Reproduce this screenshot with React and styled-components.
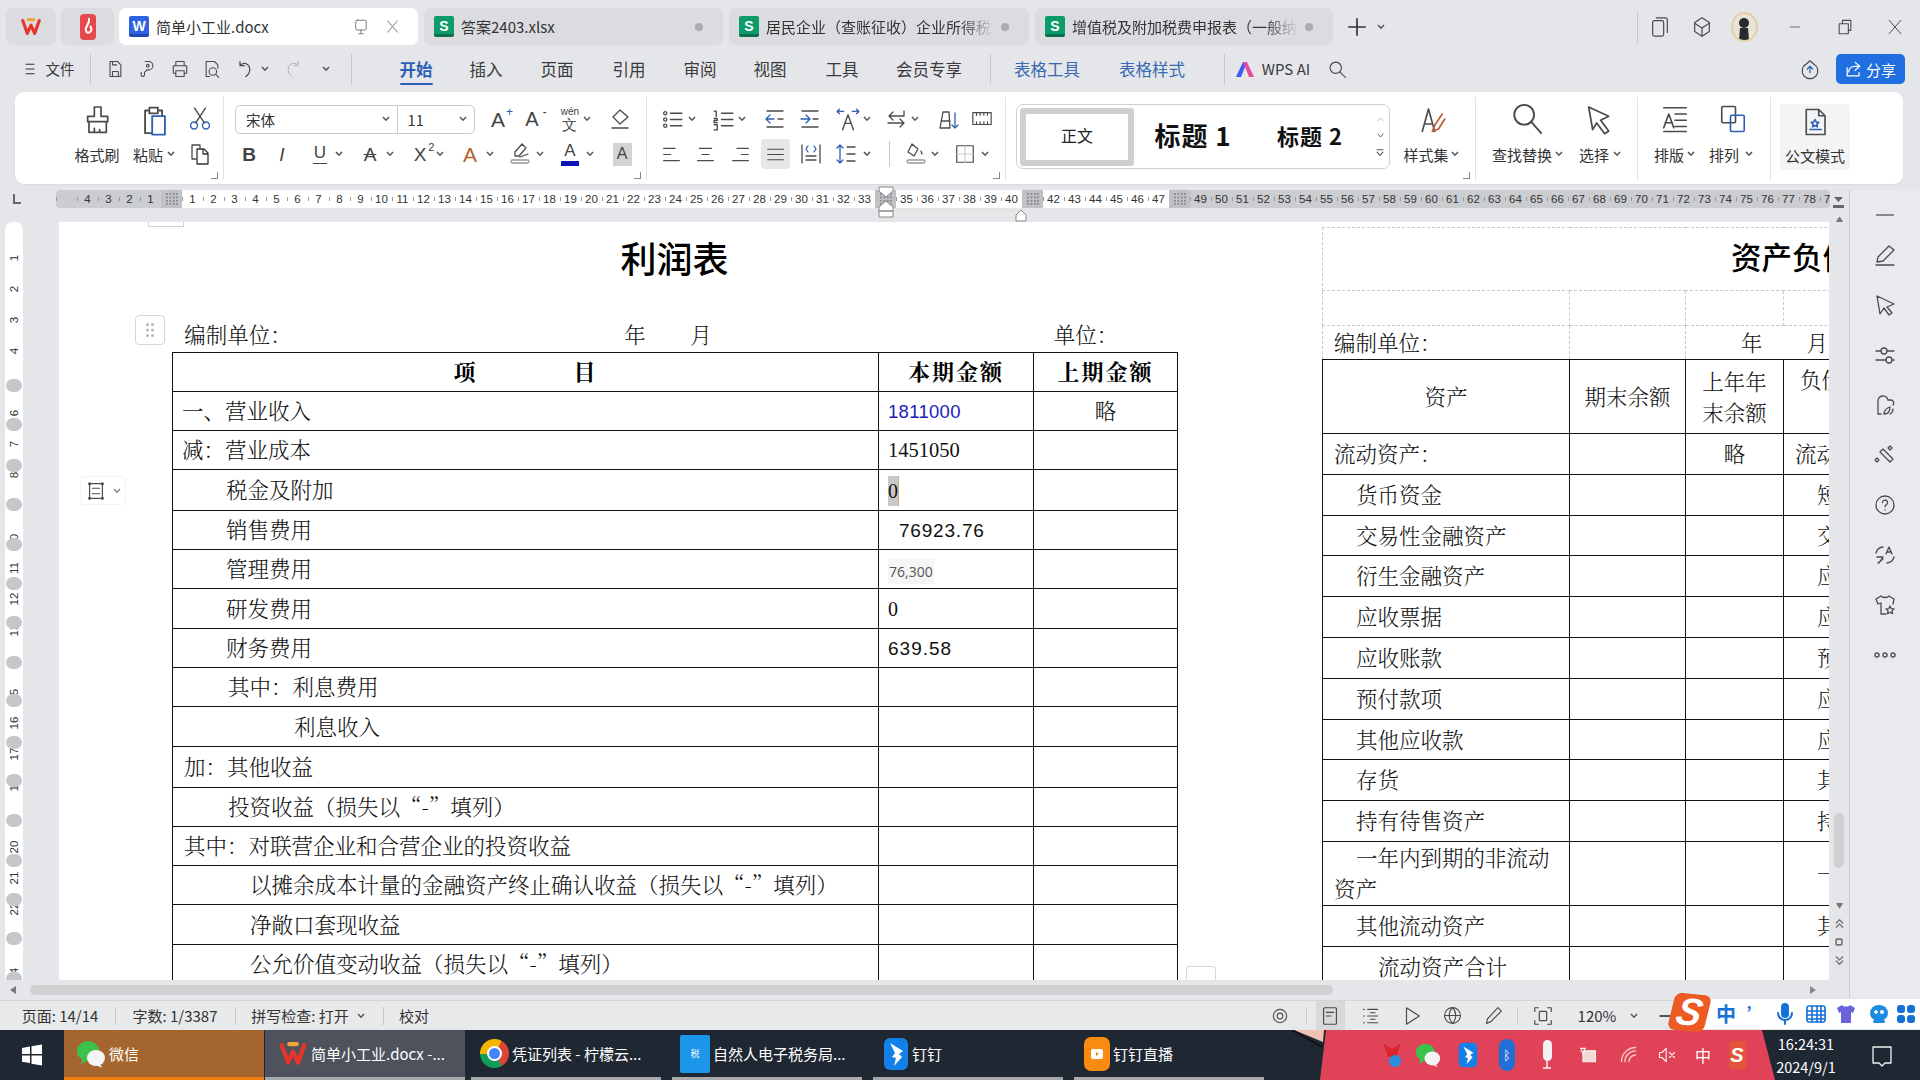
import React from 'react';
import styled, { createGlobalStyle } from 'styled-components';

const Global = createGlobalStyle`
  html, body { margin: 0; padding: 0; background: #e4e6ea; overflow: hidden; }
  * { box-sizing: border-box; }
`;
const UI = `"Noto Sans CJK SC", "Noto Sans", sans-serif`;
const SONG = `"Noto Serif CJK SC", "Noto Sans CJK SC", serif`;

const Win = styled.div`
  width: 1920px; height: 1080px; overflow: hidden; display: flex; flex-direction: column;
  background: #e4e6ea; font-family: ${UI}; color: #333; position: relative;
`;
const TrackBox = styled.div`
  display: flex; align-items: center; flex: none; height: ${p => p.$h || '100%'};
`;
const SlotBox = styled.div`
  flex: none; display: flex; align-items: center; justify-content: center; white-space: nowrap;
  width: ${p => p.$w}px; margin-left: ${p => p.$ml}px; height: 100%;
`;
const Placed = ({ start = 0, h, items }) => {
  let cur = start;
  return (
    <TrackBox $h={h}>
      {items.map(([c, w, el], i) => {
        const ml = c - w / 2 - cur;
        cur = c + w / 2;
        return <SlotBox key={i} $w={w} $ml={ml}>{el}</SlotBox>;
      })}
    </TrackBox>
  );
};

const Svg = ({ s = 20, sw = 1.3, c = '#4b4b4b', children, vb = '0 0 24 24', w }) => (
  <svg width={w || s} height={s} viewBox={vb} fill="none" stroke={c} strokeWidth={sw} strokeLinecap="round" strokeLinejoin="round">{children}</svg>
);
const Caret = ({ c = '#555' }) => (
  <svg width="8" height="6" viewBox="0 0 8 6" fill="none" stroke={c} strokeWidth="1.5"><path d="M1 1l3 3.2L7 1" /></svg>
);
const Launch = styled.div`
  position: absolute; right: 5px; bottom: 1px; width: 7px; height: 7px;
  border-right: 1.3px solid #888; border-bottom: 1.3px solid #888;
`;
const BLUE = '#2f5fb5';

/* ---------- title bar ---------- */
const TitleBar = styled.div`
  height: 50px; flex: none; display: flex; padding: 8px 0 5px 6px; gap: 5px;
`;
const AppTile = styled.div`
  width: ${p => p.$w}px; flex: none; border-radius: 7px; background: #dadce0;
  display: flex; align-items: center; justify-content: center;
`;
const Tab = styled.div`
  width: ${p => p.$w}px; margin-left: ${p => p.$ml || 0}px; flex: none; border-radius: 7px;
  background: ${p => (p.$active ? '#fff' : '#dadce0')}; display: flex; align-items: center;
  padding: 0 10px; gap: 7px; font-size: 15px; color: #333;
`;
const TabName = styled.div`
  flex: 1; white-space: nowrap; overflow: hidden;
  ${p => p.$fade && 'mask-image: linear-gradient(90deg, #000 85%, transparent);'}
`;
const DocIcon = styled.div`
  width: 20px; height: 21px; border-radius: 2px; flex: none; color: #fff; font: bold 14px/20px "Liberation Sans", sans-serif;
  text-align: center; background: ${p => p.$bg}; border-bottom: 3px solid ${p => p.$dk};
`;
const TabDot = styled.div`
  width: 8px; height: 8px; border-radius: 50%; background: #a9abaf; margin-right: 10px; flex: none;
`;
const VSep = styled.div`
  width: 1px; height: ${p => p.$h || 30}px; background: #c6c8cc;
`;
const TitleTools = styled.div`
  flex: 1; margin-left: -5px;
`;

/* ---------- menu bar ---------- */
const MenuBar = styled.div`
  height: 42px; flex: none; display: flex; position: relative; padding-bottom: 4px;
`;
const MenuText = styled.span`
  font-size: ${p => p.$fs || 16.5}px; font-weight: ${p => (p.$b ? 700 : 400)}; color: ${p => p.$c || '#3a3a3a'};
  position: relative; line-height: 30px;
  ${p => p.$b && `&::after { content: ''; position: absolute; left: 0; right: 0; bottom: -1px; height: 2.5px; background: ${BLUE}; border-radius: 1px; }`}
`;
const ShareBtn = styled.div`
  width: 69px; height: 30px; border-radius: 5px; background: #1f6fe0; color: #fff; font-size: 15px;
  display: flex; align-items: center; justify-content: center; gap: 3px;
`;

/* ---------- ribbon ---------- */
const Ribbon = styled.div`
  height: 92px; margin: 0 17px 0 15px; flex: none; background: #fff; border-radius: 9px; display: flex;
  box-shadow: 0 1px 2px rgba(0,0,0,.05);
`;
const Group = styled.div`
  width: ${p => p.$w}px; flex: none; position: relative; margin: 5px 0 4px;
  padding-top: 7px; border-right: ${p => (p.$last ? 'none' : '1px solid #e2e3e5')};
  display: flex; flex-direction: ${p => (p.$row ? 'row' : 'column')};
`;
const Stack = styled.div`
  display: flex; flex-direction: column; flex: none;
`;
const RibbonRow = styled.div`
  height: 30px; margin-bottom: 5px; display: flex;
`;
const RLabel = styled.span`
  font-size: 15px; color: #333;
`;
const FontBox = styled.div`
  width: 240px; height: 29px; border: 1px solid #c9cacd; border-radius: 5px; display: flex; align-items: center;
  font-size: 14.5px; color: #333;
`;
const FontCell = styled.div`
  width: ${p => p.$w}px; height: 100%; display: flex; align-items: center; justify-content: space-between;
  padding: 0 7px 0 10px; border-left: ${p => (p.$div ? '1px solid #c9cacd' : 'none')};
`;
const TextIcon = styled.span`
  font-family: "Liberation Sans", sans-serif; font-size: ${p => p.$fs || 19}px; font-weight: ${p => (p.$b ? 700 : 400)};
  font-style: ${p => (p.$i ? 'italic' : 'normal')}; color: ${p => p.$c || '#444'}; line-height: 1; position: relative;
  display: inline-flex; flex-direction: column; align-items: center;
`;
const Sup = styled.span`
  position: absolute; top: -3px; right: -8px; font-size: ${p => p.$fs || 12}px; color: ${p => p.$c || BLUE};
`;
const Under = styled.span`
  display: block; width: ${p => p.$w || 14}px; height: ${p => p.$h || 1.5}px; background: ${p => p.$c || '#444'}; margin-top: 2px;
`;
const GreyA = styled.span`
  width: 19px; height: 23px; background: #d2d3d5; display: flex; align-items: center; justify-content: center;
  font: 16px "Liberation Sans", sans-serif; color: #444;
`;
const HoverBox = styled.div`
  width: 29px; height: 30px; background: #e6e7e9; border-radius: 4px; display: flex; align-items: center; justify-content: center;
`;
const Gallery = styled.div`
  width: 374px; height: 65px; margin-left: 10px; border: 1px solid #cfd0d3; border-radius: 7px; display: flex; align-items: center;
  padding-left: 3px; flex: none; background: #fff;
`;
const StyleBox = styled.div`
  width: 114px; height: 58px; border: 6px solid #cfcfcf; border-radius: 3px; display: flex; align-items: center; justify-content: center;
  font-size: 16px; color: #222; flex: none; padding-bottom: 4px;
`;
const StyleName = styled.div`
  font-weight: 700; color: #111; white-space: nowrap; flex: none; letter-spacing: 1px; margin-top: -4px;
  font-size: ${p => p.$fs}px; width: ${p => p.$w}px; text-align: center;
`;
const GalleryScroll = styled.div`
  width: 24px; flex: none; height: 100%; display: flex; flex-direction: column; align-items: center; justify-content: space-around; padding: 6px 0;
`;
const ModeBox = styled.div`
  width: 70px; height: 66px; margin-left: 9px; background: #f3f4f5; border-radius: 4px; display: flex; flex-direction: column;
  align-items: center; justify-content: space-between; padding: 3px 0 4px;
`;

/* ---------- ruler ---------- */
const RulerRow = styled.div`
  height: 24px; flex: none; padding-top: 6px; display: flex; position: relative; z-index: 2;
`;
const RulerCorner = styled.div`
  width: 56px; flex: none; display: flex; align-items: center; padding-left: 12px;
`;
const Strip = styled.div`
  width: 1774px; height: 18px; flex: none; display: flex; border-radius: 4px; overflow: hidden;
`;
const RCell = styled.div`
  width: 21px; flex: none; height: 100%; position: relative; text-align: center;
  background: ${p => (p.$dark ? '#cbcdd0' : '#fff')}; font: 11.5px/18px "Liberation Sans", sans-serif; color: #333;
  &::before { content: ''; position: absolute; left: 0; top: 7px; height: 4px; width: 1px; background: #999; }
`;
const RKnob = styled.div`
  width: 21px; flex: none; height: 100%; background: #bfc1c4; display: flex; align-items: center; justify-content: center;
`;
const Overlay = styled.div`
  position: absolute; left: ${p => p.$x}px; top: ${p => p.$y}px; z-index: 3;
`;
const MarkerRail = styled.div`
  position: absolute; left: 895px; top: 28px; width: 122px; height: 4px; background: #e8e8e8;
`;

/* ---------- workspace ---------- */
const Workspace = styled.div`
  flex: 1; min-height: 0; display: flex;
`;
const DocColumn = styled.div`
  flex: 1; min-width: 0; display: flex; flex-direction: column;
`;
const DocBody = styled.div`
  flex: 1; min-height: 0; display: flex; padding-top: 14px; position: relative;
`;
const VRulerWrap = styled.div`
  width: 59px; flex: none; padding-left: 5px;
`;
const VRuler = styled.div`
  width: 18px; height: 100%; background: #fff; border-radius: 8px 8px 0 0; overflow: hidden; position: relative; padding-top: 20px;
`;
const VCell = styled.div`
  height: 31px; display: flex; align-items: center; justify-content: center; position: relative;
  font: 11.5px "Liberation Sans", sans-serif; color: #333;
`;
const VNum = styled.span`
  transform: rotate(-90deg);
`;
const VKnob = styled.div`
  position: absolute; left: 1px; width: 16px; height: 13px; border-radius: 7px; background: #c6c7c8; top: ${p => p.$y}px;
`;
const Page = styled.div`
  flex: 1; min-width: 0; background: #fff; display: flex; overflow: hidden; padding-left: 113px;
  position: relative; color: #111; font-family: ${SONG}; font-size: 21.5px; font-weight: 300;
`;
const ProfitColumn = styled.div`
  width: 1005px; flex: none; display: flex; flex-direction: column;
`;
const SheetTitle = styled.div`
  height: 72px; line-height: 70px; text-align: center; font-size: 36px; font-weight: 500; letter-spacing: 0; flex: none;
  color: #000; font-family: ${UI};
`;
const MetaRow = styled.div`
  height: 34px; margin-top: 24px; flex: none; padding-bottom: 3px;
`;
const Grid = styled.table`
  border-collapse: collapse; table-layout: fixed; flex: none; width: ${p => p.$w}px;
`;
const Rw = styled.tr`
  height: ${p => p.$h}px;
`;
const Cell = styled.td`
  border: ${p => (p.$dash ? '1px dashed #c8c8c8' : '1px solid #111')};
  padding: 0 0 2px ${p => (p.$pad ?? 9) + (p.$ind || 0)}px; white-space: nowrap; vertical-align: middle;
  line-height: 30px;
  text-align: ${p => (p.$center ? 'center' : 'left')};
  ${p => p.$center && 'padding-left: 0;'}
  ${p => p.$b && 'font-weight: 700; letter-spacing: 2px; font-size: 22px; text-align: center; padding-left: 0; color: #000;'}
`;
const HeaderTop = styled(Cell)`
  vertical-align: top; padding-top: 4px;
`;
const Num = styled.span`
  font-family: ${p => (p.$sans ? '"Liberation Sans", sans-serif' : '"Liberation Serif", serif')}; font-size: ${p => p.$fs || 20}px;
  color: ${p => p.$c || '#111'}; letter-spacing: ${p => p.$ls || 0}px; margin-left: ${p => p.$ml || 0}px; font-weight: 400;
`;
const Selected = styled.span`
  display: inline-block; background: #c9c9c9; width: 11px; height: 30px; line-height: 30px; font: 20px/30px "Liberation Serif", serif; vertical-align: middle;
  border-right: 1px solid #d9a877;
`;
const SmallNum = styled.span`
  font: 14px "Open Sans", sans-serif; color: #555; background: #f4f5f4; padding: 3px 1px; font-weight: 400;
`;
const WrapCell = styled.div`
  white-space: normal; line-height: 30.5px; text-indent: ${p => p.$ti}px; padding-right: 10px;
`;
const BalanceColumn = styled.div`
  width: 661px; flex: none; margin-left: 145px; padding-top: 5px;
`;
const BalanceTitle = styled.span`
  font-size: 30.5px; font-weight: 500; color: #000; font-family: ${UI};
`;
const LongCell = styled.div`
  line-height: 31px; white-space: normal; text-align: center; font-size: 21.5px;
`;
const YearMonth = styled.span`
  margin-left: 44px;
`;
const MoveHandle = styled.div`
  position: absolute; left: 135px; top: 107px; width: 30px; height: 30px; border: 1px solid #d5d6d8; border-radius: 4px; background: #fff;
  display: flex; align-items: center; justify-content: center; z-index: 2;
`;
const RowHandle = styled.div`
  position: absolute; left: 80px; top: 268px; width: 46px; height: 29px; border: 1px solid #f4f4f4; border-radius: 4px; background: #fff;
  display: flex; align-items: center; gap: 6px; padding-left: 4px; z-index: 2;
`;
const CornerMark = styled.div`
  position: absolute; left: 148px; top: 14px; width: 36px; height: 5px; border: 1px solid #d0d0d0; border-top: none; z-index: 2;
`;
const AddHandle = styled.div`
  position: absolute; left: 1186px; bottom: 0; width: 30px; height: 14px; border: 1px solid #d5d6d8; border-bottom: none; border-radius: 4px 4px 0 0; background: #fff; z-index: 2;
`;
const VScroll = styled.div`
  width: 20px; flex: none; position: relative; display: flex; flex-direction: column; align-items: center;
  padding-top: 7px; margin-top: -14px;
`;
const VArrows = styled.div`
  position: absolute; left: 0; right: 0; top: 693px; display: flex; flex-direction: column; align-items: center; gap: 8px; color: #777;
`;
const VThumb = styled.div`
  position: absolute; left: 5px; top: 605px; width: 10px; height: 55px; border-radius: 5px; background: #cfd0d2;
`;
const HScroll = styled.div`
  height: 20px; flex: none; padding-top: 5px; display: flex; align-items: flex-start; position: relative;
`;
const HThumb = styled.div`
  margin-left: 30px; width: 1303px; height: 10px; border-radius: 5px; background: #cfd0d2;
`;
const Tri = styled.div`
  position: absolute; top: 6px; left: ${p => p.$x}px; width: 0; height: 0;
  border-top: 4px solid transparent; border-bottom: 4px solid transparent;
  ${p => (p.$dir === 'l' ? 'border-right: 6px solid #777;' : 'border-left: 6px solid #888;')}
`;
const Sidebar = styled.div`
  width: 71px; flex: none; border-left: 1px solid #cfd1d4; background: #e9eaee; display: flex; flex-direction: column; align-items: center; margin-top: -18px; padding-top: 18px;
`;
const SideDash = styled.div`
  width: 18px; height: 2px; background: #888; margin: 6px 0 14px;
`;
const SideSlot = styled.div`
  height: 50px; flex: none; display: flex; align-items: center; justify-content: center;
`;

/* ---------- status ---------- */
const StatusBar = styled.div`
  height: 30px; flex: none; background: #e8e9eb; border-top: 1px solid #d4d5d7; display: flex; font-size: 15px; color: #333; position: relative;
`;
const ViewBox = styled.div`
  width: 29px; height: 30px; background: #d8d9db; display: flex; align-items: center; justify-content: center;
`;
const ImeBar = styled.div`
  position: absolute; left: 1690px; top: -3px; width: 232px; height: 32px; background: #fff; border: 1px solid #e6e6e6; z-index: 4; display: flex;
`;
const SogouMark = styled.div`
  position: absolute; left: 1671px; top: -7px; width: 37px; height: 37px; border-radius: 7px; background: #ee5a24; z-index: 5;
  transform: skewX(-8deg) rotate(6deg); color: #fff; font: italic 900 38px/37px "Liberation Sans", sans-serif; text-align: center;
`;

/* ---------- taskbar ---------- */
const Taskbar = styled.div`
  height: 50px; flex: none; background: #1f2733; display: flex; position: relative; color: #fff; font-size: 15px;
`;
const StartBtn = styled.div`
  width: 64px; flex: none; display: flex; align-items: center; justify-content: center;
`;
const TaskItem = styled.div`
  width: ${p => p.$w}px; margin-left: ${p => p.$ml || 0}px; flex: none; height: 100%; display: flex; align-items: center; gap: 3px; padding-left: ${p => p.$pl || 5}px;
  background: ${p => p.$bg || 'transparent'}; border-bottom: 3px solid ${p => p.$line || '#a8a9ab'}; white-space: nowrap;
`;
const Tray = styled.div`
  position: absolute; left: 1320px; top: 0; width: 455px; height: 50px; background: #e04357;
  clip-path: polygon(6px 0, 442px 0, 455px 100%, 0 100%);
`;
const Wedge = styled.div`
  position: absolute; left: 1288px; top: 0; z-index: 1;
`;
const TrayIcons = styled.div`
  position: absolute; left: 0; top: 0; z-index: 2; height: 50px; width: 1775px;
`;
const Clock = styled.div`
  position: absolute; left: 1770px; top: 0; width: 72px; height: 50px; display: flex; flex-direction: column; align-items: center; justify-content: center;
  font-size: 14.5px; line-height: 23px; z-index: 2;
`;
const Notify = styled.div`
  position: absolute; left: 1870px; top: 14px; z-index: 2;
`;
const TrayLabel = styled.span`
  font-size: 16px; color: #fff;
`;
const ChromeBall = styled.div`
  width: 29px; height: 29px; border-radius: 50%; flex: none; position: relative;
  background: conic-gradient(from 30deg, #db4437 0 120deg, #0f9d58 120deg 240deg, #f4b400 240deg 360deg);
  &::after { content: ''; position: absolute; inset: 7px; border-radius: 50%; background: #4285f4; border: 2.5px solid #fff; }
`;
const TaskTile = styled.div`
  width: ${p => p.$w || 29}px; height: ${p => p.$h || 30}px; border-radius: ${p => p.$r || 4}px; background: ${p => p.$bg}; flex: none; display: flex; align-items: center; justify-content: center;
  color: #fff; font-size: 9px;
`;
const AvatarRing = styled.div`
  width: 27px; height: 30px; border-radius: 50%; border: 2px solid #e6cfa2; background: #e9e3d9; overflow: hidden; display: flex; align-items: flex-end; justify-content: center;
`;

/* ---------- icons ---------- */
const WpsW = ({ s = 22 }) => (
  <Svg s={s} c="#e8332a" sw={3.4}><path d="M3 5l5 14 4-9 4 9 5-14" /><path d="M9 4h6" stroke="#f2a33a" /></Svg>
);
const PdfIcon = () => (
  <svg width="18" height="28" viewBox="0 0 18 28"><rect x="1" y="1" width="16" height="26" rx="4" fill="#e5484d" /><path d="M10 5c1 5-2 7-3 10s1 6 4 4c2-2 2-4 0-6" stroke="#fff" strokeWidth="2" fill="none" /></svg>
);
const Icons = {
  menu: <Svg s={16} c="#333" sw={1.6}><path d="M6 5h12M6 12h12M6 19h12" /></Svg>,
  save: <Svg><path d="M6 3h9l4 4v14H6zM9 21v-6h7v6M9 3v4h5" /></Svg>,
  key: <Svg><path d="M10 3h4a5 5 0 0 1 0 10h-2l-3 3v3a2 2 0 0 1-4 0v-3" /><circle cx="13" cy="8" r="1.6" /></Svg>,
  print: <Svg><path d="M7 8V3h10v5M7 17H4V8h16v9h-3M7 14h10v7H7z" /></Svg>,
  preview: <Svg><path d="M9 21H5V3h10l4 4v4" /><circle cx="13" cy="15" r="4.5" /><path d="M16.5 18.5 20 22" /></Svg>,
  undo: <Svg sw={1.5}><path d="M13 21c4-3 6-7 4-12-2-4-7-5-10-2M6 3v5h5" /></Svg>,
  redo: <Svg sw={1.2} c="#b0b2b5"><path d="M11 21c-4-3-6-7-4-12 2-4 7-5 10-2M18 3v5h-5" /></Svg>,
  search: <Svg s={21}><circle cx="10" cy="10" r="6.5" /><path d="M15 15l6 6" /></Svg>,
  cloud: <Svg s={22}><path d="M12 3l4 3.5a8.5 8.5 0 1 1-8 0z" /><path d="M12 16V9M9 12l3-3 3 3" stroke="#2f5fb5" /></Svg>,
  share: <Svg s={19} c="#fff" sw={1.6}><path d="M14 3l6 5-6 5M20 8h-6c-5 0-8 3-8 7M4 10v10h15v-4" /></Svg>,
  monitor: <Svg s={18} c="#777"><rect x="5" y="3" width="14" height="13" rx="2" /><path d="M12 16v4M9 21h6" /></Svg>,
  close: <Svg s={17} c="#777" sw={1.4}><path d="M5 4l14 16M19 4 5 20" /></Svg>,
  stack: <Svg s={22}><rect x="4" y="5" width="12" height="17" rx="2" /><path d="M8 2h10a2 2 0 0 1 2 2v14" /></Svg>,
  cube: <Svg s={22}><path d="M12 2l8 5v10l-8 5-8-5V7z" /><path d="M4 8l8 5 8-5M12 13v9" /></Svg>,
  min: <Svg s={16} sw={1.2}><path d="M5 12h14" /></Svg>,
  restore: <Svg s={20}><rect x="5" y="8" width="11" height="12" /><path d="M9 8V4h10v12h-3" /></Svg>,
  xBig: <Svg s={20} sw={1.2}><path d="M5 4l14 16M19 4 5 20" /></Svg>,
  brush: <Svg s={32}><path d="M10 3h5v7h5v4H5v-4h5zM6 14v8h13v-8M10 22v-3M14 22v-2" /></Svg>,
  paste: <Svg s={34}><path d="M7 6H5v16h5M15 6h2v4" /><path d="M8 4h6v4H8z" /><rect x="10" y="10" width="9" height="13" stroke="#2f5fb5" /></Svg>,
  scissors: <Svg s={26}><circle cx="6.5" cy="18" r="3.2" stroke="#2f5fb5" /><circle cx="17.5" cy="18" r="3.2" stroke="#2f5fb5" /><path d="M8 15.5 17 2M16 15.5 7 2" /></Svg>,
  copy: <Svg s={24}><path d="M4 3h8v3M4 3v14h4" /><path d="M9 7h7l4 4v11H9zM15 8v4h5" stroke="#333" /></Svg>,
  wen: <TextIcon $fs={10}><span>wén</span><TextIcon $fs={15}>文</TextIcon></TextIcon>,
  eraser: <Svg s={24}><path d="M12 3l8 7-8 7-7-7z" /><path d="M4 21h16" /></Svg>,
  bullets: <Svg s={25}><circle cx="5" cy="6" r="1.5" /><circle cx="5" cy="12" r="1.5" /><circle cx="5" cy="18" r="1.5" /><path d="M10 6h11M10 12h11M10 18h11" /></Svg>,
  numbers: <Svg s={25}><path d="M3 4h2v5M3 11h3v2H3v2h3M3 17h3v5H3" /><path d="M10 6h11M10 12h11M10 18h11" /></Svg>,
  outdent: <Svg s={24}><path d="M4 4h16M4 20h16M15 12h5" /><path d="M11 12H3M7 8l-4 4 4 4" stroke="#2f5fb5" /></Svg>,
  indent: <Svg s={24}><path d="M4 4h16M4 20h16M15 12h5" /><path d="M3 12h8M8 8l4 4-4 4" stroke="#2f5fb5" /></Svg>,
  spreadA: <Svg s={26}><path d="M2 5h6M16 5h6M4 3 2 5l2 2M20 3l2 2-2 2" stroke="#2f5fb5" /><path d="M7 22l5-14 5 14M9 16h6" /></Svg>,
  swap: <Svg s={24}><path d="M20 4v5H5M9 5 5 9l4 4M4 16h16M16 12l4 4-4 4" /></Svg>,
  sort: <Svg s={24}><path d="M5 21l3-16h6l1 16zM6 14h9" /><path d="M20 6v15M17 18l3 3 3-3" stroke="#2f5fb5" /></Svg>,
  rulerI: <Svg s={22}><path d="M2 5h20M2 5v13M22 5v13M2 18h20" /><path d="M6 5v3M10 5v3M14 5v3M18 5v3M6 18v-3M10 18v-3M14 18v-3M18 18v-3" /></Svg>,
  alignL: <Svg s={21}><path d="M3 5h13M3 12h8M3 19h18" /></Svg>,
  alignC: <Svg s={21}><path d="M5 5h14M8 12h8M3 19h18" /></Svg>,
  alignR: <Svg s={21}><path d="M8 5h13M13 12h8M3 19h18" /></Svg>,
  justify: <Svg s={21}><path d="M3 6h18M3 12h18M3 18h18" /></Svg>,
  dist: <Svg s={24}><path d="M3 3v18M21 3v18M7 18h10M7 14h10" /><path d="M9 4 7 7l2 3M15 4l2 3-2 3" stroke="#2f5fb5" /></Svg>,
  spacing: <Svg s={24}><path d="M6 3v18M3 6l3-3 3 3M3 18l3 3 3-3" stroke="#2f5fb5" /><path d="M13 5h8M13 12h8M13 19h8" /></Svg>,
  shade: <Svg s={24}><path d="M8 2l6 5-4 7-6-4zM17 9l1 3" /><rect x="3" y="18" width="18" height="3" rx="1.5" stroke="#999" /></Svg>,
  border: <Svg s={22}><rect x="3" y="3" width="18" height="18" /><path d="M12 3v18M3 12h18" stroke="#c8c8c8" /></Svg>,
  highlight: <Svg s={24}><path d="M14 2l4 4-7 8H7v-4zM20 12l-8 3" /><rect x="3" y="18" width="18" height="3" rx="1.5" stroke="#999" /></Svg>,
  styleSet: <Svg s={30}><path d="M5 22l5-18 5 18M7 16h6" /><path d="M21 8l-6 9-2 5 5-2 5-8" stroke="#c05a32" /></Svg>,
  bigSearch: <Svg s={34}><circle cx="10" cy="9" r="7" /><path d="M15 14l7 8" /></Svg>,
  cursor: <Svg s={32}><path d="M5 3l15 7-6 3 6 8-3 2-6-8-3 5z" /></Svg>,
  layout: <Svg s={30}><path d="M3 3h18M3 22h18M12 8h9M12 13h9M12 18h9M3 19l4-11 4 11M4 15h6" /></Svg>,
  arrange: <Svg s={30}><rect x="3" y="2" width="11" height="13" rx="1" /><rect x="10" y="9" width="11" height="13" rx="1" stroke="#2f5fb5" /></Svg>,
  modeDoc: <Svg s={30}><path d="M5 2h10l5 5v15H5zM15 2v5h5" /><path d="M12 10l1 2 2 .3-1.5 1.4.4 2.1-1.9-1-1.9 1 .4-2.1L9 12.3l2-.3zM8 18h9" stroke="#2f5fb5" /></Svg>,
  dots: <svg width="10" height="16" viewBox="0 0 10 16" fill="#b6b7b9"><circle cx="2.5" cy="2.5" r="1.5" /><circle cx="7.5" cy="2.5" r="1.5" /><circle cx="2.5" cy="8" r="1.5" /><circle cx="7.5" cy="8" r="1.5" /><circle cx="2.5" cy="13.5" r="1.5" /><circle cx="7.5" cy="13.5" r="1.5" /></svg>,
  grip: <svg width="12" height="12" viewBox="0 0 12 12" fill="#8a8b8d">{[1, 4.5, 8, 11].flatMap(y => [1, 4.5, 8, 11].map(x => <rect key={x + '-' + y} x={x - 1} y={y - 1} width="1.8" height="1.8" />))}</svg>,
  rowIcon: <Svg s={22}><path d="M5 4h14M5 20h14M5 4v16M19 4v16M8 9h8M8 15h8" /><circle cx="5" cy="4" r="1" fill="#555" /><circle cx="19" cy="4" r="1" fill="#555" /><circle cx="5" cy="20" r="1" fill="#555" /><circle cx="19" cy="20" r="1" fill="#555" /></Svg>,
  hour: <svg width="20" height="32" viewBox="0 0 20 32" fill="#fff" stroke="#888" strokeWidth="1"><path d="M3 1h14v4l-7 6-7-6zM3 21l7-6 7 6v4H3zM3 25h14v6H3z" /></svg>,
  tab: <svg width="14" height="14" viewBox="0 0 14 14" fill="#fff" stroke="#888"><path d="M7 1l5 5v6H2V6z" /></svg>,
  corner: <svg width="10" height="12" viewBox="0 0 10 12" fill="none" stroke="#666" strokeWidth="2"><path d="M2 1v9h7" /></svg>,
  rulerEnd: <svg width="13" height="14" viewBox="0 0 13 14" fill="#666"><path d="M2 1h9L6.500 6zM1 9h11v3H1z" /></svg>,
  pen: <Svg s={24}><path d="M16 3l5 4-11 11-6 1 1-5zM3 22h18" /></Svg>,
  cursor2: <Svg s={24}><path d="M4 3l17 8-7 3 5 6-3 2-5-7-4 6z" /></Svg>,
  sliders: <Svg s={24}><path d="M3 8h5M14 8h7M3 17h10M19 17h2" /><circle cx="11" cy="8" r="3" /><circle cx="16" cy="17" r="3" /></Svg>,
  leaf: <Svg s={24}><path d="M8 21H5V9a5 5 0 0 1 10-2h3a3 3 0 0 1 2 5M11 21c0-4 3-6 6-7 0 4-2 7-6 7zM17 21c2-1 3-3 3-5" /></Svg>,
  wand: <Svg s={24}><path d="M7 9l3-3 10 10-3 3zM4 15l2 2-2 2-2-2zM17 3l2 2-2 2-2-2z" /></Svg>,
  help: <Svg s={24}><circle cx="12" cy="12" r="9" /><path d="M9.5 9.5a2.5 2.5 0 1 1 3.7 2.2c-.8.5-1.2 1-1.2 2M12 17h.1" /></Svg>,
  trans: <Svg s={24}><path d="M10 4a8 8 0 0 0-7 6M14 20a8 8 0 0 0 7-6M13 11l3-7 3 7M14 9h4M4 14h6l-4 6M5 20l5-4" /></Svg>,
  shirt: <Svg s={24}><path d="M8 3L3 6l2 5 3-1v11h5M16 3l5 3-1 5M8 3c1 2 7 2 8 0" /><path d="M17 13l1.2 2.6 2.8.3-2 2 .5 2.8-2.5-1.4-2.5 1.4.5-2.8-2-2 2.8-.3z" /></Svg>,
  more: <svg width="22" height="6" viewBox="0 0 22 6" fill="none" stroke="#555" strokeWidth="1.5"><circle cx="3" cy="3" r="2" /><circle cx="11" cy="3" r="2" /><circle cx="19" cy="3" r="2" /></svg>,
  eye: <Svg s={20}><path d="M4 12a8 8 0 1 1 16 0 8 8 0 1 1-16 0z" /><circle cx="12" cy="12" r="3.5" /></Svg>,
  viewDoc: <Svg s={22}><rect x="5" y="3" width="14" height="18" rx="1" /><path d="M8 8h8M8 12h5" /></Svg>,
  outline: <Svg s={20}><path d="M8 4h12M8 12h12M8 20h12M3 4h1M3 12h1M3 20h1M11 8h6M11 16h6" /></Svg>,
  play: <Svg s={22}><path d="M6 3l14 9-14 9z" /></Svg>,
  globe: <Svg s={21}><circle cx="12" cy="12" r="9" /><path d="M3 12h18M12 3c-5 5-5 13 0 18M12 3c5 5 5 13 0 18" /></Svg>,
  brushPen: <Svg s={21}><path d="M17 3l4 4-12 12-5 2 1-5z" /></Svg>,
  fit: <Svg s={22}><path d="M3 7V3h4M17 3h4v4M21 17v4h-4M7 21H3v-4" /><rect x="8" y="7" width="8" height="10" rx="1" /></Svg>,
};
const ImeIcons = {
  mic: <Svg s={24} c="#1671d6" sw={2}><rect x="9" y="2" width="6" height="13" rx="3" fill="#1671d6" /><path d="M5 11a7 7 0 0 0 14 0M12 18v4" /></Svg>,
  kb: <Svg s={24} c="#1671d6" sw={1.6}><rect x="3" y="4" width="18" height="16" rx="2" /><path d="M3 9h18M3 13h18M3 17h18M8 4v16M13 4v16M17 4v16" /></Svg>,
  shirt: <svg width="24" height="24" viewBox="0 0 24 24" fill="#6a63d9"><path d="M8 3l-5 3 2 5 2-1v11h10V10l2 1 2-5-5-3c-1 2-7 2-8 0z" /></svg>,
  face: <svg width="24" height="24" viewBox="0 0 24 24"><ellipse cx="12" cy="11" rx="9" ry="8" fill="#1b8be0" /><rect x="6" y="18" width="12" height="3" rx="1.5" fill="#1b8be0" /><circle cx="15" cy="10" r="2" fill="#fff" /><path d="M7 10h4M9 8v4" stroke="#fff" strokeWidth="1.5" /></svg>,
  grid: <svg width="22" height="22" viewBox="0 0 22 22" fill="#1671d6"><rect x="2" y="2" width="8" height="8" rx="3" /><rect x="12" y="2" width="8" height="8" rx="3" /><rect x="2" y="12" width="8" height="8" rx="3" /><rect x="12" y="12" width="8" height="8" rx="3" /></svg>,
};
const WechatIcon = ({ s = 30 }) => (
  <svg width={s} height={s} viewBox="0 0 30 30"><ellipse cx="12" cy="12" rx="11" ry="10" fill="#3bc24a" /><path d="M6 20l-1 5 6-3z" fill="#3bc24a" /><ellipse cx="20" cy="19" rx="9" ry="8" fill="#f4f4f4" /><path d="M24 25l2 4-6-3z" fill="#f4f4f4" /></svg>
);
const DingIcon = ({ w = 26, h = 34 }) => (
  <svg width={w} height={h} viewBox="0 0 26 34"><rect x="1" y="1" width="24" height="32" rx="6" fill="#1280e8" /><path d="M7 6l13 8-4 3 3 3-8 9 2-8-4-1 3-4z" fill="#fff" /></svg>
);

/* ---------- data ---------- */
const rulerIdx = Array.from({ length: 85 }, (_, i) => i);

const profitRows = [
  { h: 39, t: '一、营业收入', i: 0, a: <Num $sans $c="#1c1cb5" $fs={18.5} $ls={0.3}>1811000</Num>, b: '略' },
  { h: 39, t: '减：营业成本', i: 0, a: <Num $fs={20.5}>1451050</Num> },
  { h: 41, t: '税金及附加', i: 44, a: <Selected>0</Selected> },
  { h: 39, t: '销售费用', i: 44, a: <Num $sans $fs={19} $ml={11} $ls={0.8}>76923.76</Num> },
  { h: 39, t: '管理费用', i: 44, a: <SmallNum>76,300</SmallNum> },
  { h: 40, t: '研发费用', i: 44, a: <Num $fs={20}>0</Num> },
  { h: 39, t: '财务费用', i: 44, a: <Num $sans $fs={19} $ls={1}>639.58</Num> },
  { h: 39, t: '其中：利息费用', i: 46 },
  { h: 40, t: '利息收入', i: 112 },
  { h: 41, t: '加：其他收益', i: 2 },
  { h: 39, t: '投资收益（损失以“-”填列）', i: 46 },
  { h: 39, t: '其中：对联营企业和合营企业的投资收益', i: 2 },
  { h: 39, t: '以摊余成本计量的金融资产终止确认收益（损失以“-”填列）', i: 68 },
  { h: 40, t: '净敞口套现收益', i: 68 },
  { h: 39, t: '公允价值变动收益（损失以“-”填列）', i: 68 },
];
const balanceRows = [
  { h: 41, t: '流动资产：', i: 2, c: '略', d: '流动负债：', p: 11 },
  { h: 41, t: '货币资金', i: 24, d: '短期借款', p: 33 },
  { h: 40, t: '交易性金融资产', i: 24, d: '交易性金融负债', p: 33 },
  { h: 41, t: '衍生金融资产', i: 24, d: '应付票据', p: 33 },
  { h: 41, t: '应收票据', i: 24, d: '应付账款', p: 33 },
  { h: 41, t: '应收账款', i: 24, d: '预收款项', p: 33 },
  { h: 41, t: '预付款项', i: 24, d: '应付职工薪酬', p: 33 },
  { h: 40, t: '其他应收款', i: 24, d: '应交税费', p: 33 },
  { h: 41, t: '存货', i: 24, d: '其他应付款', p: 33 },
  { h: 41, t: '持有待售资产', i: 24, d: '持有待售负债', p: 33 },
  { h: 63, wrap: true, t: '一年内到期的非流动资产', d: '一年内到期的非流动负债', p: 33, i: 2 },
  { h: 41, t: '其他流动资产', i: 24, d: '其他流动负债', p: 33 },
  { h: 41, t: '流动资产合计', i: 46 },
];
const vNums = ['1', '2', '3', '4', '', '6', '7', '8', '', '0', '11', '12', '13', '', '5', '16', '17', '18', '', '20', '21', '22', '2', '4'];
const vKnobs = [385, 424, 465, 504, 544, 583, 622, 662, 700, 742, 780, 820, 860, 899, 938, 978];

export default function App() {
  return (
    <Win>
      <Global />
      <TitleBar>
        <AppTile $w={50}><WpsW /></AppTile>
        <AppTile $w={53}><PdfIcon /></AppTile>
        <Tab $w={299} $active>
          <DocIcon $bg="#2f62e0" $dk="#1f47ad">W</DocIcon>
          <TabName>简单小工业.docx</TabName>
          {Icons.monitor}
          <span />
          {Icons.close}
          <span />
        </Tab>
        <Tab $w={299} $ml={1}>
          <DocIcon $bg="#0e9b6c" $dk="#0a6d4c">S</DocIcon>
          <TabName>答案2403.xlsx</TabName>
          <TabDot />
        </Tab>
        <Tab $w={300} $ml={1}>
          <DocIcon $bg="#0e9b6c" $dk="#0a6d4c">S</DocIcon>
          <TabName $fade>居民企业（查账征收）企业所得税</TabName>
          <TabDot />
        </Tab>
        <Tab $w={298} $ml={1}>
          <DocIcon $bg="#0e9b6c" $dk="#0a6d4c">S</DocIcon>
          <TabName $fade>增值税及附加税费申报表（一般纳</TabName>
          <TabDot />
        </Tab>
        <TitleTools>
          <Placed start={1333} items={[
            [1357, 22, <Svg s={22} sw={1.8} c="#333"><path d="M12 3v18M3 12h18" /></Svg>],
            [1381, 8, <Caret />],
            [1637, 1, <VSep $h={32} />],
            [1660, 22, Icons.stack],
            [1702, 22, Icons.cube],
            [1744, 27, <AvatarRing><svg width="16" height="25" viewBox="0 0 16 25" fill="#2a2a2e"><circle cx="8" cy="8" r="5" /><path d="M3 25l1-12h8l1 12z" /></svg></AvatarRing>],
            [1795, 16, Icons.min],
            [1845, 20, Icons.restore],
            [1895, 20, Icons.xBig],
          ]} />
        </TitleTools>
      </TitleBar>

      <MenuBar>
        <Placed items={[
          [30, 16, Icons.menu],
          [60, 30, <MenuText $fs={14.5}>文件</MenuText>],
          [90, 1, <VSep />],
          [115, 20, Icons.save],
          [147, 20, Icons.key],
          [180, 20, Icons.print],
          [212, 20, Icons.preview],
          [245, 20, Icons.undo],
          [265, 8, <Caret />],
          [293, 20, Icons.redo],
          [326, 8, <Caret />],
          [351, 1, <VSep />],
          [416, 36, <MenuText $b $c={BLUE}>开始</MenuText>],
          [486, 36, <MenuText>插入</MenuText>],
          [557, 36, <MenuText>页面</MenuText>],
          [629, 36, <MenuText>引用</MenuText>],
          [700, 36, <MenuText>审阅</MenuText>],
          [770, 36, <MenuText>视图</MenuText>],
          [842, 36, <MenuText>工具</MenuText>],
          [929, 70, <MenuText>会员专享</MenuText>],
          [990, 1, <VSep />],
          [1047, 70, <MenuText $c="#3a69b0">表格工具</MenuText>],
          [1152, 70, <MenuText $c="#3a69b0">表格样式</MenuText>],
          [1224, 1, <VSep />],
          [1245, 20, <svg width="20" height="20" viewBox="0 0 20 20"><path d="M1 18 8 3h4L6 18z" fill="#3d5bf0" /><path d="M8 3h4l7 15h-5z" fill="#e84a9a" /></svg>],
          [1286, 56, <MenuText $fs={15}>WPS AI</MenuText>],
          [1337, 21, Icons.search],
          [1810, 22, Icons.cloud],
          [1870, 69, <ShareBtn>{Icons.share}分享</ShareBtn>],
        ]} />
      </MenuBar>

      <Ribbon>
        <Group $w={209}>
          <RibbonRow><Placed start={15} items={[
            [97, 34, Icons.brush], [155, 34, Icons.paste], [200, 26, Icons.scissors],
          ]} /></RibbonRow>
          <RibbonRow><Placed start={15} items={[
            [97, 48, <RLabel>格式刷</RLabel>], [148, 32, <RLabel>粘贴</RLabel>], [171, 8, <Caret />], [200, 24, Icons.copy],
          ]} /></RibbonRow>
          <Launch />
        </Group>
        <Group $w={423}>
          <RibbonRow><Placed start={224} items={[
            [355, 240, (
              <FontBox>
                <FontCell $w={162}>宋体<Caret /></FontCell>
                <FontCell $w={78} $div>11<Caret /></FontCell>
              </FontBox>
            )],
            [498, 22, <TextIcon $fs={21}>A<Sup>+</Sup></TextIcon>],
            [532, 22, <TextIcon $fs={20}>A<Sup $c="#444">-</Sup></TextIcon>],
            [570, 26, Icons.wen],
            [587, 8, <Caret />],
            [620, 24, Icons.eraser],
          ]} /></RibbonRow>
          <RibbonRow><Placed start={224} items={[
            [249, 20, <TextIcon $b $fs={19}>B</TextIcon>],
            [282, 20, <TextIcon $i $fs={19}>I</TextIcon>],
            [320, 20, <TextIcon $fs={17}>U<Under /></TextIcon>],
            [339, 8, <Caret />],
            [370, 20, <TextIcon $fs={19} style={{ textDecoration: 'line-through' }}>A</TextIcon>],
            [390, 8, <Caret />],
            [420, 24, <TextIcon $fs={19}>X<Sup $c="#444" $fs={11}>2</Sup></TextIcon>],
            [440, 8, <Caret />],
            [470, 22, <TextIcon $fs={21} $c="#b5622c">A</TextIcon>],
            [490, 8, <Caret />],
            [520, 24, Icons.highlight],
            [540, 8, <Caret />],
            [570, 20, <TextIcon $fs={17}>A<Under $w={18} $h={5} $c="#0c14b8" /></TextIcon>],
            [590, 8, <Caret />],
            [622, 19, <GreyA>A</GreyA>],
          ]} /></RibbonRow>
          <Launch />
        </Group>
        <Group $w={359}>
          <RibbonRow><Placed start={647} items={[
            [672, 25, Icons.bullets], [692, 8, <Caret />],
            [723, 25, Icons.numbers], [742, 8, <Caret />],
            [775, 24, Icons.outdent], [810, 24, Icons.indent],
            [848, 26, Icons.spreadA], [867, 8, <Caret />],
            [896, 24, Icons.swap], [915, 8, <Caret />],
            [947, 24, Icons.sort], [982, 22, Icons.rulerI],
          ]} /></RibbonRow>
          <RibbonRow><Placed start={647} items={[
            [671, 21, Icons.alignL], [705, 21, Icons.alignC], [740, 21, Icons.alignR],
            [775, 29, <HoverBox>{Icons.justify}</HoverBox>],
            [811, 24, Icons.dist], [846, 24, Icons.spacing], [867, 8, <Caret />],
            [889, 1, <VSep $h={26} />],
            [916, 24, Icons.shade], [935, 8, <Caret />],
            [965, 22, Icons.border], [985, 8, <Caret />],
          ]} /></RibbonRow>
          <Launch />
        </Group>
        <Group $w={470} $row>
          <Gallery>
            <StyleBox>正文</StyleBox>
            <StyleName $fs={26} $w={118}>标题 1</StyleName>
            <StyleName $fs={22} $w={116}>标题 2</StyleName>
            <GalleryScroll>
              <Svg s={9} c="#bbb" sw={2.5}><path d="M5 16l7-8 7 8" /></Svg>
              <Svg s={9} c="#555" sw={2.5}><path d="M5 8l7 8 7-8" /></Svg>
              <Svg s={10} c="#555" sw={2.5}><path d="M5 4h14M5 10l7 8 7-8" /></Svg>
            </GalleryScroll>
          </Gallery>
          <Stack>
            <RibbonRow><Placed start={1390} items={[[1431, 30, Icons.styleSet]]} /></RibbonRow>
            <RibbonRow><Placed start={1390} items={[[1426, 48, <RLabel>样式集</RLabel>], [1455, 8, <Caret />]]} /></RibbonRow>
          </Stack>
          <Launch />
        </Group>
        <Group $w={162}>
          <RibbonRow><Placed start={1476} items={[[1527, 34, Icons.bigSearch], [1598, 32, Icons.cursor]]} /></RibbonRow>
          <RibbonRow><Placed start={1476} items={[
            [1522, 62, <RLabel>查找替换</RLabel>], [1559, 8, <Caret />], [1594, 32, <RLabel>选择</RLabel>], [1617, 8, <Caret />],
          ]} /></RibbonRow>
        </Group>
        <Group $w={133}>
          <RibbonRow><Placed start={1638} items={[[1675, 30, Icons.layout], [1733, 30, Icons.arrange]]} /></RibbonRow>
          <RibbonRow><Placed start={1638} items={[
            [1669, 32, <RLabel>排版</RLabel>], [1691, 8, <Caret />], [1724, 32, <RLabel>排列</RLabel>], [1749, 8, <Caret />],
          ]} /></RibbonRow>
        </Group>
        <Group $w={132} $last>
          <ModeBox>{Icons.modeDoc}<RLabel>公文模式</RLabel></ModeBox>
        </Group>
      </Ribbon>

      <RulerRow>
        <RulerCorner>{Icons.corner}</RulerCorner>
        <Strip>
          {rulerIdx.map(i => {
            const n = i - 5;
            if (i === 5 || n === 34 || n === 41 || n === 48) return <RKnob key={i}>{Icons.grip}</RKnob>;
            const label = i === 0 ? '' : i < 5 ? String(5 - i) : String(n);
            return <RCell key={i} $dark={i < 5 || n > 48}>{label}</RCell>;
          })}
        </Strip>
        <Overlay $x={1832} $y={7}>{Icons.rulerEnd}</Overlay>
        <Overlay $x={876} $y={2}>{Icons.hour}</Overlay>
        <Overlay $x={1014} $y={20}>{Icons.tab}</Overlay>
        <MarkerRail />
      </RulerRow>

      <Workspace>
        <DocColumn>
          <DocBody>
            <VRulerWrap>
              <VRuler>
                {vNums.map((n, i) => <VCell key={i}><VNum>{n}</VNum></VCell>)}
                {vKnobs.map(y => <VKnob key={y} $y={y - 228} />)}
              </VRuler>
            </VRulerWrap>
            <Page>
              <ProfitColumn>
                <SheetTitle>利润表</SheetTitle>
                <MetaRow>
                  <Placed start={0} items={[
                    [66, 108, '编制单位：'],
                    [463, 22, '年'],
                    [529, 22, '月'],
                    [914, 54, '单位：'],
                  ]} />
                </MetaRow>
                <Grid $w={1005}>
                  <colgroup><col width="706" /><col width="155" /><col width="144" /></colgroup>
                  <tbody>
                    <Rw $h={39}>
                      <Cell $b>项　　　　目</Cell>
                      <Cell $b>本期金额</Cell>
                      <Cell $b>上期金额</Cell>
                    </Rw>
                    {profitRows.map(r => (
                      <Rw key={r.t} $h={r.h}>
                        <Cell $ind={r.i}>{r.t}</Cell>
                        <Cell>{r.a}</Cell>
                        <Cell $center>{r.b}</Cell>
                      </Rw>
                    ))}
                  </tbody>
                </Grid>
              </ProfitColumn>
              <BalanceColumn>
                <Grid $w={661}>
                  <colgroup><col width="247" /><col width="116" /><col width="98" /><col width="200" /></colgroup>
                  <tbody>
                    <Rw $h={63}><Cell $dash colSpan={4} $pad={408}><BalanceTitle>资产负债表</BalanceTitle></Cell></Rw>
                    <Rw $h={35}><Cell $dash /><Cell $dash /><Cell $dash /><Cell $dash /></Rw>
                    <Rw $h={34}>
                      <Cell $dash $pad={11}>编制单位：</Cell>
                      <Cell $dash />
                      <Cell $dash colSpan={2} $pad={55}>年<YearMonth>月</YearMonth></Cell>
                    </Rw>
                    <Rw $h={74}>
                      <Cell $center>资产</Cell>
                      <Cell $center>期末余额</Cell>
                      <Cell $center><LongCell>上年年<br />末余额</LongCell></Cell>
                      <HeaderTop $pad={16}>负债和所有者权益</HeaderTop>
                    </Rw>
                    {balanceRows.map(r => (
                      <Rw key={r.t} $h={r.h}>
                        <Cell $ind={r.i}>{r.wrap ? <WrapCell $ti={22}>{r.t}</WrapCell> : r.t}</Cell>
                        <Cell />
                        <Cell $center>{r.c}</Cell>
                        <Cell $pad={r.p}>{r.d}</Cell>
                      </Rw>
                    ))}
                  </tbody>
                </Grid>
              </BalanceColumn>
            </Page>
            <MoveHandle>{Icons.dots}</MoveHandle>
            <RowHandle>{Icons.rowIcon}<Caret c="#888" /></RowHandle>
            <CornerMark />
            <AddHandle />
            <VScroll>
              <Svg s={9} c="#777" sw={3}><path d="M12 6l7 11H5z" fill="#777" /></Svg>
              <VThumb />
              <VArrows>
                <Svg s={9} c="#777" sw={3}><path d="M5 7h14l-7 11z" fill="#777" /></Svg>
                <Svg s={11} c="#777" sw={3}><path d="M5 11l7-7 7 7M5 20l7-7 7 7" /></Svg>
                <Svg s={10} c="#777" sw={4}><rect x="5" y="5" width="14" height="14" rx="2" /></Svg>
                <Svg s={11} c="#777" sw={3}><path d="M5 4l7 7 7-7M5 13l7 7 7-7" /></Svg>
              </VArrows>
            </VScroll>
          </DocBody>
          <HScroll>
            <Tri $x={10} $dir="l" />
            <HThumb />
            <Tri $x={1810} />
          </HScroll>
        </DocColumn>
        <Sidebar>
          <SideDash />
          <SideSlot>{Icons.pen}</SideSlot>
          <SideSlot>{Icons.cursor2}</SideSlot>
          <SideSlot>{Icons.sliders}</SideSlot>
          <SideSlot>{Icons.leaf}</SideSlot>
          <SideSlot>{Icons.wand}</SideSlot>
          <SideSlot>{Icons.help}</SideSlot>
          <SideSlot>{Icons.trans}</SideSlot>
          <SideSlot>{Icons.shirt}</SideSlot>
          <SideSlot>{Icons.more}</SideSlot>
        </Sidebar>
      </Workspace>

      <StatusBar>
        <Placed items={[
          [60, 84, '页面: 14/14'],
          [115, 1, <VSep $h={18} />],
          [175, 92, '字数: 1/3387'],
          [235, 1, <VSep $h={18} />],
          [300, 108, '拼写检查: 打开'],
          [361, 8, <Caret />],
          [383, 1, <VSep $h={18} />],
          [414, 32, '校对'],
          [1280, 20, Icons.eye],
          [1306, 1, <VSep $h={18} />],
          [1330, 29, <ViewBox>{Icons.viewDoc}</ViewBox>],
          [1371, 20, Icons.outline],
          [1412, 22, Icons.play],
          [1452, 21, Icons.globe],
          [1493, 21, Icons.brushPen],
          [1517, 1, <VSep $h={18} />],
          [1543, 22, Icons.fit],
          [1597, 40, '120%'],
          [1634, 8, <Caret />],
          [1666, 20, <Svg s={16} c="#222" sw={2.2}><path d="M3 12h18" /></Svg>],
        ]} />
        <ImeBar>
          <Placed start={1690} items={[
            [1725, 20, <TextIcon $fs={20} $c="#1671d6" style={{ fontFamily: UI, fontWeight: 700 }}>中</TextIcon>],
            [1755, 12, <TextIcon $fs={18} $c="#1671d6" $b style={{ fontFamily: UI }}>’</TextIcon>],
            [1784, 24, ImeIcons.mic],
            [1815, 24, ImeIcons.kb],
            [1845, 24, ImeIcons.shirt],
            [1878, 24, ImeIcons.face],
            [1905, 22, ImeIcons.grid],
          ]} />
        </ImeBar>
        <SogouMark>S</SogouMark>
      </StatusBar>

      <Taskbar>
        <StartBtn>
          <svg width="22" height="24" viewBox="0 0 22 24" fill="#fff"><path d="M1 5l8-1.500V11H1zM10.500 3.200 21 1.500V11H10.500zM1 12.500h8V20L1 18.800zM10.500 12.500H21V22.500L10.500 20.800z" /></svg>
        </StartBtn>
        <TaskItem $w={200} $bg="#a5652e" $line="#f07f12" $pl={12}><WechatIcon />微信</TaskItem>
        <TaskItem $w={200} $ml={1} $bg="#4d525c" $pl={13}><WpsW s={30} />简单小工业.docx -...</TaskItem>
        <TaskItem $w={190} $ml={6} $pl={9}><ChromeBall />凭证列表 - 柠檬云...</TaskItem>
        <TaskItem $w={190} $ml={11} $pl={8}><TaskTile $w={30} $h={38} $r={2} $bg="#1c96e8">税</TaskTile>自然人电子税务局...</TaskItem>
        <TaskItem $w={190} $ml={11} $pl={10}><DingIcon />钉钉</TaskItem>
        <TaskItem $w={190} $ml={11} $pl={10}><TaskTile $w={26} $h={34} $r={7} $bg="#f98a12"><svg width="14" height="14" viewBox="0 0 14 14"><rect x="1" y="2" width="12" height="10" rx="2" fill="#fff" /><path d="M6 5l3 2-3 2z" fill="#f98a12" /></svg></TaskTile>钉钉直播</TaskItem>
        <Wedge>
          <svg width="38" height="20" viewBox="0 0 38 20"><path d="M6 0l30 0-1 12z" fill="#f1c1b4" /><path d="M4 0l30 17" stroke="#111" strokeWidth="2" /></svg>
        </Wedge>
        <Tray />
        <TrayIcons>
          <Placed start={0} items={[
            [1392, 22, <svg width="22" height="28" viewBox="0 0 22 28"><path d="M2 2l9 6 9-6-5 14H7z" fill="#d9262c" /><circle cx="14" cy="20" r="6" fill="#2b8fe0" /></svg>],
            [1428, 26, <WechatIcon s={26} />],
            [1468, 20, <DingIcon w={20} h={30} />],
            [1507, 18, <TaskTile $w={16} $h={32} $r={8} $bg="#1f6fd6"><TextIcon $fs={13} $c="#fff">ᛒ</TextIcon></TaskTile>],
            [1547, 16, <svg width="16" height="32" viewBox="0 0 16 32"><rect x="4" y="1" width="9" height="21" rx="4.500" fill="#f2f2f2" /><path d="M8 22v7M4 29h8" stroke="#f2f2f2" strokeWidth="1.500" /></svg>],
            [1588, 20, <Svg s={20} c="#f5f5f5"><rect x="6" y="7" width="15" height="13" fill="#f5d9d9" /><path d="M3 4h6M4 4v4M8 4v4M6 8v4" /></Svg>],
            [1629, 20, <Svg s={20} c="#f5c7cc" sw={1.6}><path d="M3 20a17 17 0 0 1 17-17M7 20A13 13 0 0 1 20 7M12 20a8 8 0 0 1 8-8" /></Svg>],
            [1667, 20, <Svg s={20} c="#f5f5f5"><path d="M3 9h3l5-5v16l-5-5H3zM15 9l6 6M21 9l-6 6" /></Svg>],
            [1703, 20, <TrayLabel>中</TrayLabel>],
            [1737, 18, <TaskTile $w={17} $h={28} $r={3} $bg="#e2553a"><TextIcon $fs={20} $b $c="#fff" $i>S</TextIcon></TaskTile>],
          ]} />
        </TrayIcons>
        <Clock><span>16:24:31</span><span>2024/9/1</span></Clock>
        <Notify>
          <Svg s={24} c="#f2f2f2"><path d="M3 3h18v16h-6l-3 3-3-3H3z" /></Svg>
        </Notify>
      </Taskbar>
    </Win>
  );
}
